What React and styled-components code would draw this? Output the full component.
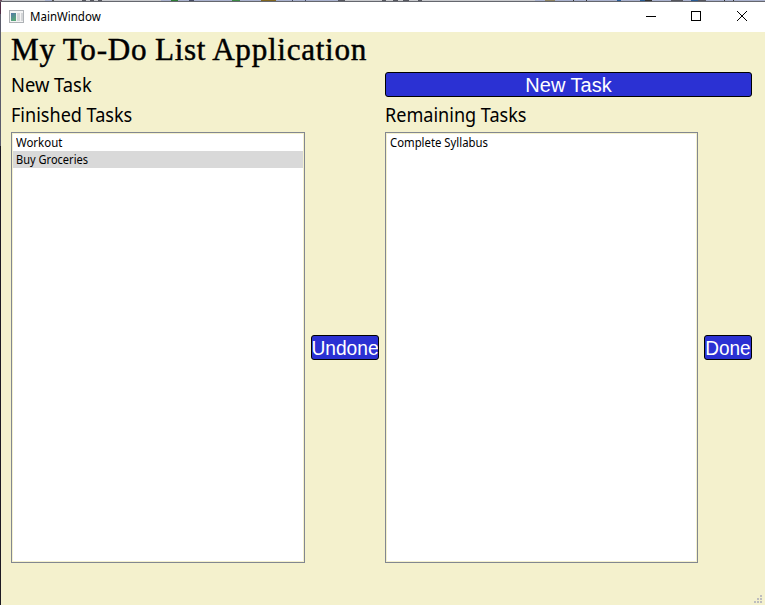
import React from 'react';
import styled, { createGlobalStyle } from 'styled-components';

const GlobalStyle = createGlobalStyle`
  * { box-sizing: border-box; }
  body { margin: 0; overflow: hidden; background: #f4f1cd; }
`;

const Screen = styled.div`
  width: 765px;
  height: 605px;
  display: grid;
  grid-template: 2px 603px / 1px 764px;
  overflow: hidden;
`;

const DesktopTop = styled.div`
  grid-column: 1 / 3;
  border-bottom: 1px solid #65676e;
  background: linear-gradient(90deg,
    #6b4a5e 0 2px, #c8c9cd 2px 45px, #a9b1cd 45px 52px, #555 52px 54px, #c8c9cd 54px 82px,
    #55565e 82px 86px, #c8c9cd 86px 90px, #55565e 90px 94px, #c8c9cd 94px 98px, #55565e 98px 102px,
    #c8c9cd 102px 161px, #a9b1cd 161px 171px, #2c7c35 171px 178px,
    #a9b1cd 178px 189px, #444a62 189px 194px, #a9b1cd 194px 232px, #3c8a45 232px 240px,
    #a9b1cd 240px 261px, #80651f 261px 276px, #a9b1cd 276px 292px, #444a62 292px 293px,
    #a9b1cd 293px 305px, #444a62 305px 306px, #a9b1cd 306px 338px, #55565e 338px 345px,
    #c8c9cd 345px 382px, #55565e 382px 386px, #c8c9cd 386px 393px, #55565e 393px 398px,
    #c8c9cd 398px 403px, #55565e 403px 409px, #c8c9cd 409px 418px, #55565e 418px 422px,
    #c8c9cd 422px 535px, #a9b1cd 535px 545px, #8d8260 545px 555px,
    #a9b1cd 555px 573px, #333 573px 574px, #a9b1cd 574px 586px, #333 586px 587px,
    #a9b1cd 587px 617px, #285b94 617px 621px, #a9b1cd 621px 640px, #285b94 640px 645px,
    #333 645px 652px, #a9b1cd 652px 671px, #55565e 671px 683px, #a9b1cd 683px 691px,
    #285b94 691px 698px, #55565e 698px 706px, #a9b1cd 706px 724px, #333 724px 725px,
    #a9b1cd 725px 733px, #333 733px 734px, #a9b1cd 734px);
`;

const DesktopLeft = styled.div`
  background: linear-gradient(#502c46 0 12px, #5b5c6b 12px 144px, #1d1a23 144px);
`;

const Window = styled.main`
  display: grid;
  grid-template-rows: 30px 573px;
  font-family: "Noto Sans", "Open Sans", sans-serif;
  color: #000;
`;

const TitleBar = styled.header`
  display: flex;
  align-items: center;
  padding-left: 8px;
  background: #fff;
`;

const AppIcon = styled.svg`
  width: 16px;
  height: 14px;
  margin-top: -1px;
`;

const Text = styled.span`
  display: inline-block;
  flex: none;
  white-space: nowrap;
  transform-origin: ${({ $centered }) => ($centered ? 'center' : 'left center')};
  transform: scaleX(${({ $scale = 1 }) => $scale});
`;

const Caption = styled.div`
  margin-left: 5px;
  font-size: 12px;
  line-height: 30px;
  flex: 1;
`;

const Controls = styled.div`
  display: grid;
  grid-template-columns: 46px 44px 48px;
  margin-right: -1px;
`;

const WindowControl = styled.button`
  height: 30px;
  padding: 0;
  border: 0;
  background: none;
  display: grid;
  place-items: center;
  svg { display: block; margin-top: -2px; }
`;

const Content = styled.section`
  background: #f4f1cd;
  padding-left: 10px;
  display: grid;
  grid-template-columns: 294px 68px 313px 48px;
  grid-template-rows: 40px 25px 35px 431px 1fr;
  column-gap: 6px;
`;

const Heading = styled.h1`
  grid-column: 1 / -1;
  margin: 0;
  font: 400 31px/35px "Liberation Serif", serif;
  letter-spacing: 0.7px;
  word-spacing: -0.8px;
  -webkit-text-stroke: 0.45px #000;
`;

const Label = styled.div`
  grid-column: span 2;
  align-self: center;
  font-size: 19px;
  line-height: 27px;
  height: 25px;
`;

const PushButton = styled.button`
  grid-column: ${({ $wide }) => ($wide ? 'span 2' : 'auto')};
  align-self: center;
  height: 25px;
  width: 100%;
  padding: 0;
  border: 1px solid #000;
  border-radius: 3px;
  background: #2b31d3;
  color: #fff;
  font: 20px/24px "Liberation Sans", Arial, sans-serif;
  display: flex;
  justify-content: center;
  overflow: hidden;
`;

const TaskList = styled.ul`
  height: 431px;
  margin: 0;
  padding: 1px;
  list-style: none;
  border: 1px solid #828790;
  background: #fff;
  box-shadow: inset 0 0 0 1px #f4f1cd;
`;

const Task = styled.li`
  height: 17px;
  padding-left: 3px;
  font-size: 12px;
  line-height: 17px;
  background: ${({ $selected }) => ($selected ? '#d9d9d9' : 'transparent')};
`;

const Footer = styled.footer`
  grid-column: 1 / -1;
  width: 751px;
  display: flex;
  justify-content: flex-end;
  align-items: flex-end;
  padding-bottom: 2px;
`;

const finished = [{ name: 'Workout', scale: 0.955 }, { name: 'Buy Groceries', scale: 0.92, selected: true }];
const remaining = [{ name: 'Complete Syllabus', scale: 0.945 }];

function Tasks({ items }) {
  return (
    <TaskList>
      {items.map((item) => (
        <Task key={item.name} $selected={item.selected}><Text $scale={item.scale}>{item.name}</Text></Task>
      ))}
    </TaskList>
  );
}

export default function App() {
  return (
    <>
      <GlobalStyle />
      <Screen>
        <DesktopTop />
        <DesktopLeft />
        <Window>
          <TitleBar>
            <AppIcon viewBox="0 0 16 14">
              <defs>
                <linearGradient id="pane" x2="0.5" y2="1">
                  <stop stopColor="#5377a8" /><stop offset="1" stopColor="#58a878" />
                </linearGradient>
              </defs>
              <path fill="#aeb2b6" d="M0 0h15v13H0z" />
              <path fill="#f4f4f4" d="M1 1h13v11H1z" />
              <path fill="url(#pane)" d="M2 3h5v8H2z" />
              <path fill="#d4d6d8" d="M8 3h3v8H8zM12 3h2v8h-2z" />
            </AppIcon>
            <Caption><Text $scale={0.96}>MainWindow</Text></Caption>
            <Controls>
              <WindowControl aria-label="Minimize">
                <svg width="10" height="10" shapeRendering="crispEdges"><path d="M0 5.5h10" stroke="#000" /></svg>
              </WindowControl>
              <WindowControl aria-label="Maximize">
                <svg width="10" height="10" shapeRendering="crispEdges"><path d="M.5.5h9v9h-9z" stroke="#000" fill="none" /></svg>
              </WindowControl>
              <WindowControl aria-label="Close">
                <svg width="10" height="10"><path d="M0 0l10 10M10 0L0 10" stroke="#000" /></svg>
              </WindowControl>
            </Controls>
          </TitleBar>
          <Content>
            <Heading><Text $scale={1.005}>My To-Do List Application</Text></Heading>
            <Label><Text $scale={0.965}>New Task</Text></Label>
            <PushButton $wide><Text $centered>New Task</Text></PushButton>
            <Label><Text $scale={0.95}>Finished Tasks</Text></Label>
            <Label><Text $scale={0.95}>Remaining Tasks</Text></Label>
            <Tasks items={finished} />
            <PushButton><Text $centered $scale={0.96}>Undone</Text></PushButton>
            <Tasks items={remaining} />
            <PushButton><Text $centered $scale={0.95}>Done</Text></PushButton>
            <Footer>
              <svg width="8" height="8" fill="#bdbdbd" shapeRendering="crispEdges">
                <path d="M6 0h2v2H6zM3 3h2v2H3zM6 3h2v2H6zM0 6h2v2H0zM3 6h2v2H3zM6 6h2v2H6z" />
              </svg>
            </Footer>
          </Content>
        </Window>
      </Screen>
    </>
  );
}
